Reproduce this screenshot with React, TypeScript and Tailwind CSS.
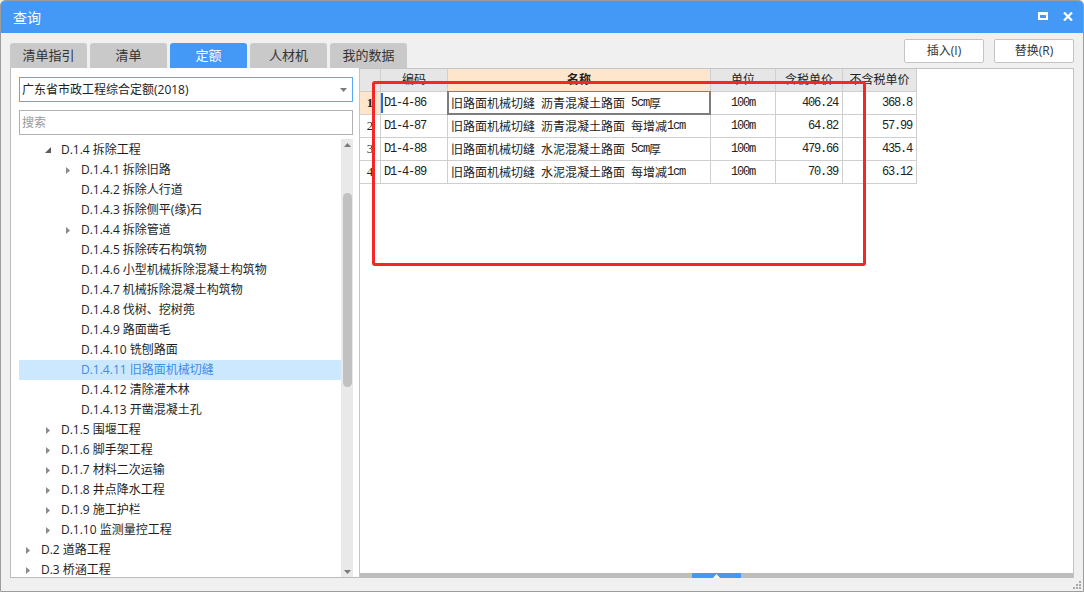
import React from "react";

type Node = { l: 0 | 1 | 2; t: string; a?: "open" | "closed"; sel?: boolean };

const tree: Node[] = [
  { l: 1, t: "D.1.4 拆除工程", a: "open" },
  { l: 2, t: "D.1.4.1 拆除旧路", a: "closed" },
  { l: 2, t: "D.1.4.2 拆除人行道" },
  { l: 2, t: "D.1.4.3 拆除侧平(缘)石" },
  { l: 2, t: "D.1.4.4 拆除管道", a: "closed" },
  { l: 2, t: "D.1.4.5 拆除砖石构筑物" },
  { l: 2, t: "D.1.4.6 小型机械拆除混凝土构筑物" },
  { l: 2, t: "D.1.4.7 机械拆除混凝土构筑物" },
  { l: 2, t: "D.1.4.8 伐树、挖树蔸" },
  { l: 2, t: "D.1.4.9 路面凿毛" },
  { l: 2, t: "D.1.4.10 铣刨路面" },
  { l: 2, t: "D.1.4.11 旧路面机械切缝", sel: true },
  { l: 2, t: "D.1.4.12 清除灌木林" },
  { l: 2, t: "D.1.4.13 开凿混凝土孔" },
  { l: 1, t: "D.1.5 围堰工程", a: "closed" },
  { l: 1, t: "D.1.6 脚手架工程", a: "closed" },
  { l: 1, t: "D.1.7 材料二次运输", a: "closed" },
  { l: 1, t: "D.1.8 井点降水工程", a: "closed" },
  { l: 1, t: "D.1.9 施工护栏", a: "closed" },
  { l: 1, t: "D.1.10 监测量控工程", a: "closed" },
  { l: 0, t: "D.2 道路工程", a: "closed" },
  { l: 0, t: "D.3 桥涵工程", a: "closed" },
];

const rows = [
  { n: "1", code: "D1-4-86", name: "旧路面机械切缝 沥青混凝土路面 5cm厚", unit: "100m", tax: "406.24", notax: "368.8" },
  { n: "2", code: "D1-4-87", name: "旧路面机械切缝 沥青混凝土路面 每增减1cm", unit: "100m", tax: "64.82", notax: "57.99" },
  { n: "3", code: "D1-4-88", name: "旧路面机械切缝 水泥混凝土路面 5cm厚", unit: "100m", tax: "479.66", notax: "435.4" },
  { n: "4", code: "D1-4-89", name: "旧路面机械切缝 水泥混凝土路面 每增减1cm", unit: "100m", tax: "70.39", notax: "63.12" },
];

const indent: Record<number, string> = { 0: "pl-[2px]", 1: "pl-[22px]", 2: "pl-[42px]" };

function Mixed({ text }: { text: string }) {
  const runs = text.match(/[\x00-\x7f]+|[^\x00-\x7f]+/g) || [];
  return (
    <>
      {runs.map((r, i) =>
        /^[\x00-\x7f]/.test(r) ? (
          <span key={i} className="font-['Liberation_Mono',monospace] tracking-[-1.2px] whitespace-pre">
            {r}
          </span>
        ) : (
          <span key={i} className="font-['Noto_Sans_CJK_SC',sans-serif]">
            {r}
          </span>
        )
      )}
    </>
  );
}

function Arrow({ a }: { a?: "open" | "closed" }) {
  return (
    <div className="w-[14px] h-[20px] flex items-center justify-center shrink-0">
      {a === "closed" && (
        <svg width="4" height="7" viewBox="0 0 4 7">
          <polygon points="0,0 4,3.5 0,7" fill="#8a8a8a" />
        </svg>
      )}
      {a === "open" && (
        <svg width="6" height="6" viewBox="0 0 6 6">
          <polygon points="6,0 6,6 0,6" fill="#5a5a5a" />
        </svg>
      )}
    </div>
  );
}

const tabs = ["清单指引", "清单", "定额", "人材机", "我的数据"];

export default function App() {
  return (
    <div className="relative w-[1084px] h-[592px] bg-[#f0f0f0] border border-[#9c9c9c] rounded-t-[5px] overflow-hidden flex flex-col font-['Open_Sans','Noto_Sans_CJK_SC',sans-serif] text-[#222]">
      {/* title bar */}
      <div className="h-[32px] shrink-0 bg-[#4499f6] flex items-center pl-[12px] pr-[10px] text-white">
        <span className="text-[14px] font-['Noto_Sans_CJK_SC',sans-serif] leading-none">查询</span>
        <div className="ml-auto flex items-center gap-[15px] mt-[-2px]">
          <div className="w-[10px] h-[8px] border-2 border-t-[3px] border-white" />
          <svg width="10" height="9" viewBox="0 0 10 9">
            <path d="M1 0.5 L9 8.5 M9 0.5 L1 8.5" stroke="white" strokeWidth="2.2" />
          </svg>
        </div>
      </div>

      <div className="flex-1 flex flex-col px-[9px]">
        {/* tab row */}
        <div className="h-[35px] shrink-0 flex items-start">
          <div className="flex gap-[3px] mt-[10px]">
            {tabs.map((t) => (
              <div
                key={t}
                className={
                  t === "定额"
                    ? "w-[77px] h-[25px] rounded-t-[3px] flex items-center justify-center text-[13px] bg-[#4499f6] text-white"
                    : "w-[77px] h-[25px] rounded-t-[3px] flex items-center justify-center text-[13px] bg-[#c9c9c9] text-[#333]"
                }
              >
                {t}
              </div>
            ))}
          </div>
          <div className="ml-auto flex gap-[10px] mt-[6px]">
            {["插入(I)", "替换(R)"].map((b) => (
              <div
                key={b}
                className="w-[80px] h-[24px] bg-white border border-[#c4c4c4] rounded-[2px] flex items-center justify-center text-[12px] text-[#333]"
              >
                {b}
              </div>
            ))}
          </div>
        </div>

        {/* main area */}
        <div className="h-[510px] shrink-0 flex">
          {/* left panel */}
          <div className="w-[349px] shrink-0 bg-white border-l border-b border-[#bcbcbc] pl-[8px] pr-[6px] pt-[9px] flex flex-col">
            <div className="h-[25px] shrink-0 border border-[#5aa6f7] flex items-center pl-[2px] pr-[5px] text-[12px]">
              <span>广东省市政工程综合定额(2018)</span>
              <svg className="ml-auto" width="7" height="4" viewBox="0 0 7 4">
                <polygon points="0,0 7,0 3.5,4" fill="#7c7c7c" />
              </svg>
            </div>
            <div className="h-[25px] shrink-0 mt-[8px] border border-[#b0b0b0] flex items-center pl-[2px] text-[12px] text-[#9a9a9a]">
              搜索
            </div>
            <div className="flex-1 mt-[4px] flex overflow-hidden">
              <div className="flex-1 overflow-hidden pt-[1px]">
                {tree.map((n) => (
                  <div
                    key={n.t}
                    className={
                      "h-[20px] flex items-center text-[12px] leading-[20px] whitespace-nowrap " +
                      indent[n.l] +
                      (n.sel ? " bg-[#cce8ff] text-[#3b8de6]" : " text-[#1e1e1e]")
                    }
                  >
                    <Arrow a={n.a} />
                    <span className="ml-[6px]">{n.t}</span>
                  </div>
                ))}
              </div>
              <div className="w-[12px] shrink-0 bg-[#e9e9e9] flex flex-col items-center">
                <div className="h-[11px] flex items-center justify-center">
                  <svg width="7" height="4" viewBox="0 0 7 4">
                    <polygon points="3.5,0 7,4 0,4" fill="#7a7a7a" />
                  </svg>
                </div>
                <div className="mt-[43px] w-[9px] h-[194px] rounded-[5px] bg-[#c1c1c1]" />
                <div className="flex-1" />
                <div className="h-[11px] flex items-center justify-center">
                  <svg width="7" height="4" viewBox="0 0 7 4">
                    <polygon points="0,0 7,0 3.5,4" fill="#7a7a7a" />
                  </svg>
                </div>
              </div>
            </div>
          </div>

          {/* right panel */}
          <div className="flex-1 bg-white border-t border-l border-r border-[#c4c4c4] flex flex-col">
            <div className="flex-1 overflow-hidden">
              <div className="w-[557px] text-[12px] text-[#222]">
                {/* header */}
                <div className="h-[23px] flex">
                  <div className="w-[21px] bg-[#e6e6e6] border-r border-b border-[#cfcfcf]" />
                  <div className="w-[67px] bg-[#e6e6e6] border-r border-b border-[#cfcfcf] flex items-center justify-center">
                    编码
                  </div>
                  <div className="w-[263px] bg-[#fde6cb] border-r border-b border-[#cfcfcf] flex items-center justify-center font-bold">
                    名称
                  </div>
                  <div className="w-[65px] bg-[#e6e6e6] border-r border-b border-[#cfcfcf] flex items-center justify-center">
                    单位
                  </div>
                  <div className="w-[67px] bg-[#e6e6e6] border-r border-b border-[#cfcfcf] flex items-center justify-center">
                    含税单价
                  </div>
                  <div className="w-[74px] bg-[#e6e6e6] border-r border-b border-[#cfcfcf] flex items-center justify-center">
                    不含税单价
                  </div>
                </div>
                {rows.map((r, i) => (
                  <div key={r.n} className="h-[23px] flex">
                    <div
                      className={
                        i === 0
                          ? "w-[21px] bg-[#fde6cb] border-r border-b border-[#cfcfcf] flex items-center justify-center font-['Liberation_Serif',serif] text-[13px] font-bold"
                          : "w-[21px] bg-white border-r border-b border-[#cfcfcf] flex items-center justify-center font-['Liberation_Serif',serif] text-[13px]"
                      }
                    >
                      {r.n}
                    </div>
                    <div className="relative w-[67px] border-r border-b border-[#cfcfcf] flex items-center pl-[3px]">
                      {i === 0 && <div className="absolute left-0 top-[1px] bottom-[1px] w-[2px] bg-[#1f6fe5]" />}
                      <Mixed text={r.code} />
                    </div>
                    <div className="relative w-[263px] border-r border-b border-[#cfcfcf] flex items-center pl-[3px] whitespace-nowrap overflow-visible">
                      {i === 0 && (
                        <div className="absolute left-[-1px] top-[-1px] right-[-1px] bottom-[-1px] border-2 border-[#7d7d7d] border-t-[1px] border-t-[#3d8fe6]" />
                      )}
                      <Mixed text={r.name} />
                    </div>
                    <div className="w-[65px] border-r border-b border-[#cfcfcf] flex items-center justify-center">
                      <Mixed text={r.unit} />
                    </div>
                    <div className="w-[67px] border-r border-b border-[#cfcfcf] flex items-center justify-end pr-[4px]">
                      <Mixed text={r.tax} />
                    </div>
                    <div className="w-[74px] border-r border-b border-[#cfcfcf] flex items-center justify-end pr-[4px]">
                      <Mixed text={r.notax} />
                    </div>
                  </div>
                ))}
              </div>
            </div>
            <div className="h-[5px] shrink-0 bg-[#bdbdbd] flex">
              <div className="w-[332px]" />
              <div className="w-[49px] bg-[#4499f6] flex items-center justify-center">
                <svg width="7" height="4" viewBox="0 0 7 4">
                  <polygon points="3.5,0 7,4 0,4" fill="#ffffff" />
                </svg>
              </div>
            </div>
          </div>
        </div>
      </div>

      {/* bottom spacer */}
      <div className="h-[13px] shrink-0" />

      {/* red annotation box */}
      <div className="absolute left-[371px] top-[80px] w-[494px] h-[185px] border-[3px] border-[#f52626] rounded-[3px]" />

      {/* resize grip */}
      <svg className="absolute right-[1px] bottom-[1px]" width="10" height="10" viewBox="0 0 10 10">
        <rect x="7" y="1" width="2" height="2" fill="#a8a8a8" />
        <rect x="4" y="4" width="2" height="2" fill="#a8a8a8" />
        <rect x="7" y="4" width="2" height="2" fill="#a8a8a8" />
        <rect x="1" y="7" width="2" height="2" fill="#a8a8a8" />
        <rect x="4" y="7" width="2" height="2" fill="#a8a8a8" />
        <rect x="7" y="7" width="2" height="2" fill="#a8a8a8" />
      </svg>
    </div>
  );
}
